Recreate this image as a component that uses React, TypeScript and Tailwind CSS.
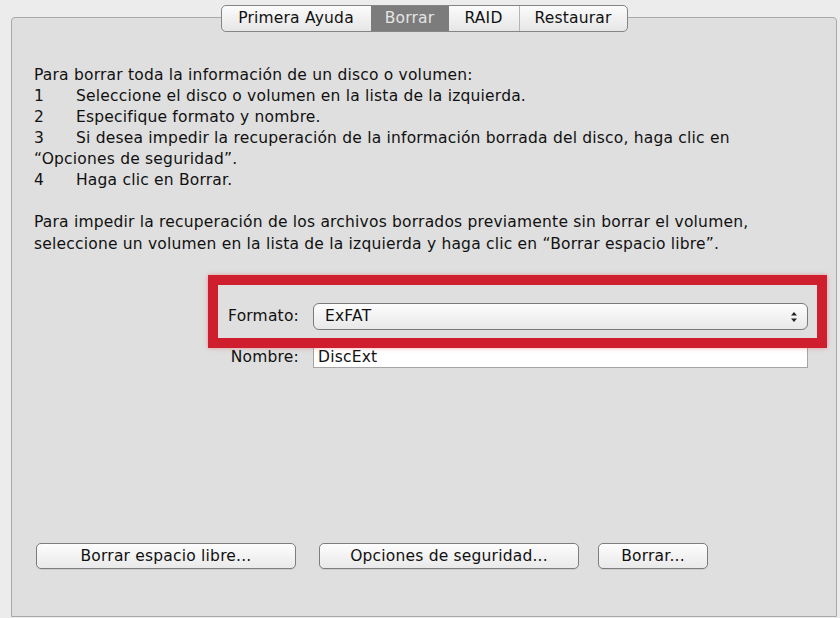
import React from 'react';

const font = { fontFamily: '"DejaVu Sans", "Noto Sans", Arial, sans-serif' };

const tabs = [
  { label: 'Primera Ayuda', w: 'w-[149px]' },
  { label: 'Borrar', w: 'w-[78px]', active: true },
  { label: 'RAID', w: 'w-[70px]' },
  { label: 'Restaurar', w: 'w-[108px]' },
];

function StepperArrows() {
  return (
    <svg width="8" height="12" viewBox="0 0 8 12" className="shrink-0">
      <path d="M4 1 L7 4.5 L1 4.5 Z" fill="#222" />
      <path d="M4 11 L7 7.5 L1 7.5 Z" fill="#222" />
    </svg>
  );
}

function MacButton({ label, w }: { label: string; w: string }) {
  return (
    <button
      className={`${w} h-[26px] rounded-[5px] border border-[#7d7d7d] bg-gradient-to-b from-[#fdfdfd] to-[#e9e9e9] text-[15.5px] tracking-[0.2px] text-[#111] shadow-[0_1px_0_rgba(0,0,0,0.08)]`}
    >
      {label}
    </button>
  );
}

export default function App() {
  return (
    <div className="w-[840px] h-[618px] overflow-hidden bg-[#ececec] pt-[5px]" style={font}>
      {/* Tabs */}
      <div className="relative z-10 flex h-[27px] w-[826px] ml-[11px] justify-center">
        <div className="flex rounded-[5px] border border-[#858585] bg-gradient-to-b from-[#fbfbfb] to-[#e6e6e6] overflow-hidden">
          {tabs.map((t, i) => (
            <div
              key={t.label}
              className={`${t.w} flex items-center justify-center text-[15.5px] tracking-[0.2px] ${
                t.active
                  ? 'bg-[#7c7c7c] text-[#e4e4e4]'
                  : 'text-[#111]'
              } ${i > 0 && !t.active && !tabs[i - 1].active ? 'border-l border-[#b5b5b5]' : ''}`}
            >
              {t.label}
            </div>
          ))}
        </div>
      </div>

      {/* Panel */}
      <div className="relative -mt-[15px] ml-[11px] flex h-[600px] w-[826px] flex-col rounded-t-[4px] border border-[#a9a9a9] bg-[#dfdfdf] pl-[22px] pt-[47px] pb-[47px] text-[15.5px] leading-[21px] tracking-[0.2px] text-[#111]">
        <p>Para borrar toda la información de un disco o volumen:</p>
        <div className="flex">
          <span className="w-[42px]">1</span>
          <span>Seleccione el disco o volumen en la lista de la izquierda.</span>
        </div>
        <div className="flex">
          <span className="w-[42px]">2</span>
          <span>Especifique formato y nombre.</span>
        </div>
        <div className="flex">
          <span className="w-[42px]">3</span>
          <span>Si desea impedir la recuperación de la información borrada del disco, haga clic en</span>
        </div>
        <p>“Opciones de seguridad”.</p>
        <div className="flex">
          <span className="w-[42px]">4</span>
          <span>Haga clic en Borrar.</span>
        </div>

        <p className="mt-[20px] leading-[22px]">
          Para impedir la recuperación de los archivos borrados previamente sin borrar el volumen,
          <br />
          seleccione un volumen en la lista de la izquierda y haga clic en “Borrar espacio libre”.
        </p>

        {/* Form */}
        <div className="mt-[48px] flex items-center">
          <span className="w-[279px] pr-[14px] text-right">Formato:</span>
          <div className="flex h-[27px] w-[495px] items-center justify-between rounded-[6px] border border-[#7a7a7a] bg-gradient-to-b from-[#fdfdfd] to-[#e8e8e8] pl-[11px] pr-[9px]">
            <span>ExFAT</span>
            <StepperArrows />
          </div>
        </div>
        <div className="mt-[16px] flex items-center">
          <span className="w-[279px] pr-[14px] text-right">Nombre:</span>
          <div className="flex h-[22px] w-[495px] items-center border border-[#a5a5a5] bg-white pl-[4px]">
            DiscExt
          </div>
        </div>

        {/* Buttons */}
        <div className="mt-auto ml-[2px] flex gap-[23px]">
          <MacButton label="Borrar espacio libre..." w="w-[260px]" />
          <MacButton label="Opciones de seguridad..." w="w-[260px]" />
          <div className="-ml-[4px]">
            <MacButton label="Borrar..." w="w-[110px]" />
          </div>
        </div>

        {/* red annotation box */}
        <div className="pointer-events-none absolute left-[196px] top-[257px] h-[73px] w-[619px] border-[10px] border-[#cf1f2e] shadow-[0_0_4px_rgba(230,80,90,0.5)]" />
      </div>
    </div>
  );
}
